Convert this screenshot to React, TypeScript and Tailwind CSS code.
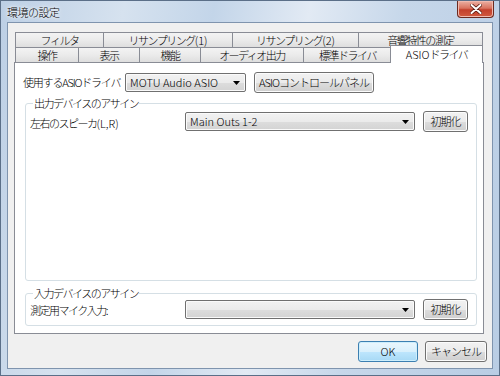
// 環境の設定 — ASIOドライバ タブを開いたダイアログ (Vista Aero 風)
import React from "react";

const font = 'font-["Noto_Sans_CJK_JP",sans-serif] font-light';
const ja = "tracking-[-1.5px]";

function Ascii({ children }: { children: React.ReactNode }) {
  return <span className="tracking-normal">{children}</span>;
}

// 普通のボタン
function Btn({ children, w, primary = false, tight = "" }: { children: React.ReactNode; w: string; primary?: boolean; tight?: string }) {
  return (
    <div
      className={`${w} ${tight} h-[21px] rounded-[3px] border flex items-center justify-center text-[11px] leading-none text-black whitespace-nowrap ${
        primary
          ? "border-[#3c7fb1] bg-[linear-gradient(#eaf6fd_0%,#d9f0fc_50%,#bee6fd_51%,#a7d9f5_100%)] shadow-[inset_0_0_0_1px_#cdeefc]"
          : "border-[#707070] bg-[linear-gradient(#f2f2f2_0%,#ebebeb_50%,#dddddd_51%,#cfcfcf_100%)] shadow-[inset_0_0_0_1px_#fcfcfc]"
      }`}
    >
      {children}
    </div>
  );
}

// 読み取り専用コンボボックス
function Combo({ value, w }: { value?: string; w: string }) {
  return (
    <div
      className={`${w} h-[19px] rounded-[2px] border border-[#707070] bg-[linear-gradient(#f2f2f2_0%,#ebebeb_50%,#dddddd_51%,#d3d3d3_100%)] shadow-[inset_0_0_0_1px_#fafafa] flex items-center justify-between pl-[4px] pr-[5px] text-[11px] leading-none text-black whitespace-nowrap`}
    >
      <span>{value}</span>
      <svg width="7" height="4" viewBox="0 0 7 4">
        <path d="M0 0h7L3.5 4z" fill="#000" />
      </svg>
    </div>
  );
}

function Tab({ children, w, last = false }: { children: React.ReactNode; w: string; last?: boolean }) {
  return (
    <div
      className={`${w} ${ja} h-[15px] border-t border-l ${last ? "border-r" : ""} border-[#898c95] bg-[linear-gradient(#f3f3f3_0%,#ebebeb_50%,#dedede_100%)] flex items-center justify-center text-[11px] leading-none text-black whitespace-nowrap`}
    >
      {children}
    </div>
  );
}

function Group({ legend, h, children }: { legend: string; h: string; children: React.ReactNode }) {
  return (
    <fieldset className={`${h} border border-[#d5dfe5] rounded-[3px] pl-[4px] pr-[8px]`}>
      <legend className={`${ja} ml-[3px] px-[1px] text-[11px] leading-[14px] text-black`}>{legend}</legend>
      {children}
    </fieldset>
  );
}

export default function App() {
  return (
    <div className={`${font} w-[500px] h-[376px] flex flex-col border border-[#5b6f88] bg-[linear-gradient(100deg,#bccfe5_0%,#d6e2ef_22%,#c3d5e9_38%,#e2eaf4_55%,#c6d7ea_72%,#b9cde4_100%)]`}>
      {/* タイトルバー */}
      <div className="h-[21px] flex items-start justify-between">
        <span className="pl-[6px] pt-[4px] text-[11px] leading-[14px] tracking-[-0.5px] text-black [text-shadow:0_0_6px_#ffffff,0_0_3px_#ffffff]">
          環境の設定
        </span>
        <div className="mr-[5px] w-[37px] h-[17px] rounded-b-[4px] border border-t-0 border-[#6b2a20] bg-[linear-gradient(#ebb0a3_0%,#d9735f_45%,#c3402c_55%,#d15a3f_100%)] shadow-[inset_0_0_0_1px_#f0b9ae] flex items-center justify-center">
          <svg width="12" height="10" viewBox="0 0 12 10">
            <path d="M1.5 1l9 8M10.5 1l-9 8" stroke="#5a1a10" strokeWidth="3.6" strokeLinecap="round" />
            <path d="M1.5 1l9 8M10.5 1l-9 8" stroke="#ffffff" strokeWidth="2" strokeLinecap="round" />
          </svg>
        </div>
      </div>

      {/* クライアント領域 */}
      <div className="flex-1 mx-[6px] mb-[6px] border border-[#7f94ae] bg-[#f0f0f0] flex flex-col pt-[9px]">
        {/* タブ (2段) */}
        <div className="ml-[7px] flex">
          <Tab w="w-[88px]">フィルタ</Tab>
          <Tab w="w-[129px]">リサンプリング<Ascii>(1)</Ascii></Tab>
          <Tab w="w-[126px]">リサンプリング<Ascii>(2)</Ascii></Tab>
          <Tab w="w-[125px]" last>音響特性の測定</Tab>
        </div>
        <div className="ml-[7px] flex items-end h-[15px]">
          <Tab w="w-[63px]">操作</Tab>
          <Tab w="w-[61px]">表示</Tab>
          <Tab w="w-[61px]">機能</Tab>
          <Tab w="w-[103px]">オーディオ出力</Tab>
          <Tab w="w-[88px]">標準ドライバ</Tab>
          <div className={`${ja} relative z-10 -mb-px w-[93px] h-[18px] -ml-px border border-b-0 border-[#898c95] bg-white flex items-center justify-center text-[11px] leading-none text-black`}>
            <Ascii>ASIO</Ascii>ドライバ
          </div>
        </div>

        {/* タブの中身 */}
        <div className="ml-[6px] w-[470px] h-[272px] border border-[#898c95] bg-white flex flex-col pl-[8px] pr-[6px] pt-[9px]">
          <div className="h-[21px] flex items-center">
            <span className="w-[102px] whitespace-nowrap text-[11px] leading-none tracking-[-1.2px] text-black">使用するASIOドライバ</span>
            <Combo value="MOTU Audio ASIO" w="w-[121px]" />
            <div className="ml-[8px]">
              <Btn w="w-[120px]" tight="tracking-[-1px]">ASIOコントロールパネル</Btn>
            </div>
          </div>

          <div className="mt-[3px] ml-[2px] flex flex-col gap-[5px]">
            <Group legend="出力デバイスのアサイン" h="h-[185px]">
              <div className="mt-[1px] h-[21px] flex items-center gap-[8px]">
                <span className={`${ja} flex-1 pt-[3px] whitespace-nowrap text-[11px] leading-none text-black`}>
                  左右のスピーカ<Ascii>(L,R)</Ascii>
                </span>
                <Combo value="Main Outs 1-2" w="w-[230px]" />
                <Btn w="w-[45px]" tight="tracking-[-1px]">初期化</Btn>
              </div>
            </Group>
            <Group legend="入力デバイスのアサイン" h="h-[40px]">
              <div className="mt-[-1px] h-[21px] flex items-center gap-[8px]">
                <span className={`${ja} flex-1 pt-[2px] whitespace-nowrap text-[11px] leading-none text-black`}>
                  測定用マイク入力<Ascii>:</Ascii>
                </span>
                <Combo w="w-[230px]" />
                <Btn w="w-[45px]" tight="tracking-[-1px]">初期化</Btn>
              </div>
            </Group>
          </div>
        </div>

        {/* OK / キャンセル */}
        <div className="mt-[7px] flex justify-end gap-[7px] pr-[5px]">
          <Btn w="w-[60px]" primary>OK</Btn>
          <Btn w="w-[62px]" tight="tracking-[-1px]">キャンセル</Btn>
        </div>
      </div>
    </div>
  );
}
